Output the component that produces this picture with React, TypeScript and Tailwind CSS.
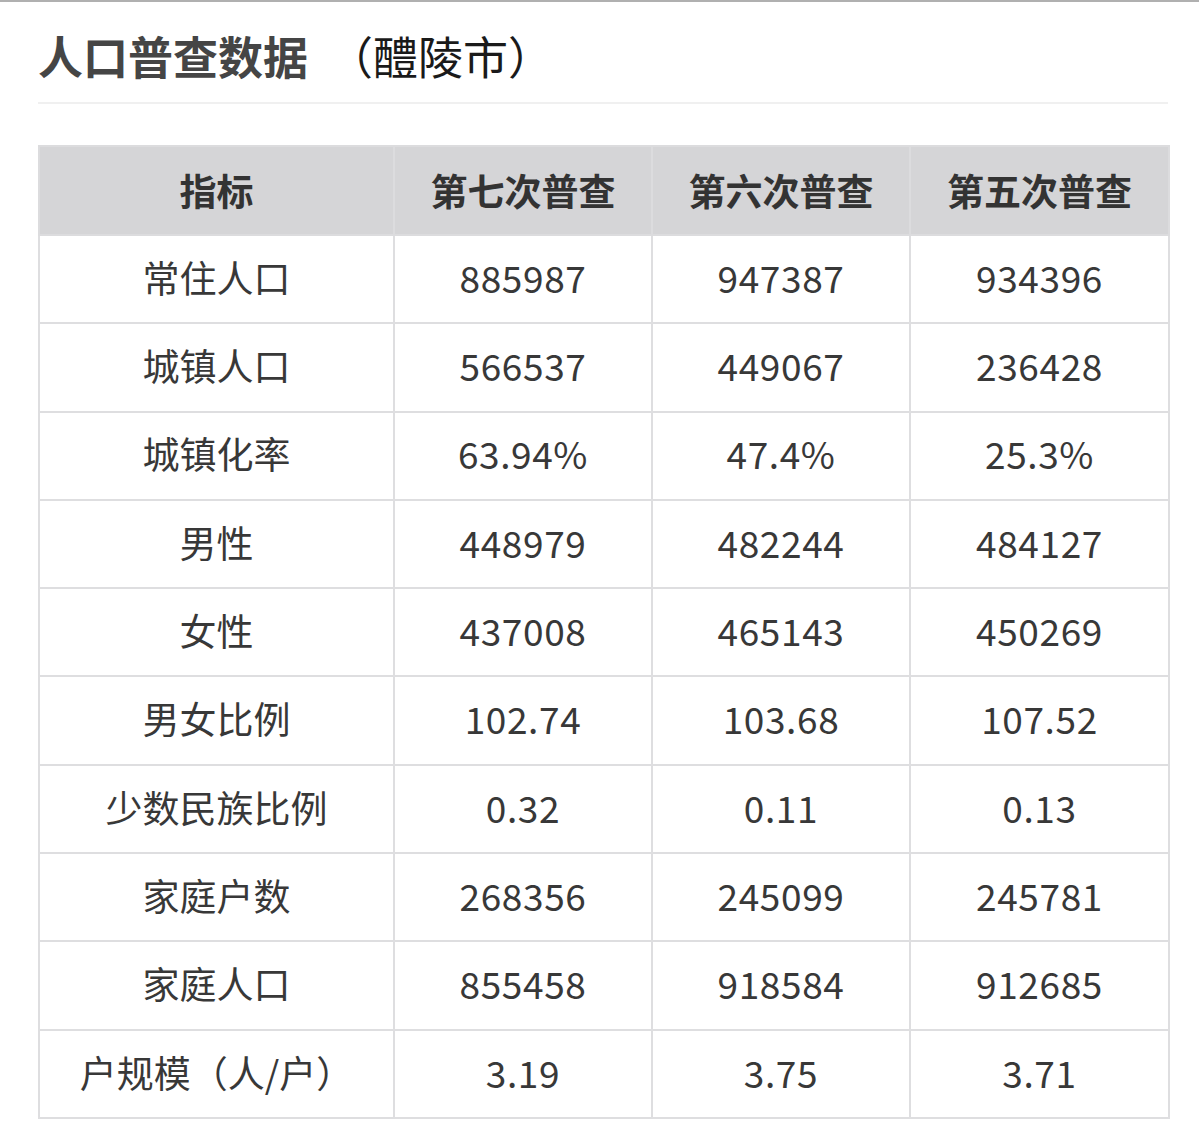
const headers = ['指标', '第七次普查', '第六次普查', '第五次普查'];

const rows = [
  ['常住人口', '885987', '947387', '934396'],
  ['城镇人口', '566537', '449067', '236428'],
  ['城镇化率', '63.94%', '47.4%', '25.3%'],
  ['男性', '448979', '482244', '484127'],
  ['女性', '437008', '465143', '450269'],
  ['男女比例', '102.74', '103.68', '107.52'],
  ['少数民族比例', '0.32', '0.11', '0.13'],
  ['家庭户数', '268356', '245099', '245781'],
  ['家庭人口', '855458', '918584', '912685'],
  ['户规模（人/户）', '3.19', '3.75', '3.71'],
];

export default function App() {
  return (
    <div
      className="min-h-[1126px] w-[1199px] bg-white border-t-2 border-[#b0b0b0]"
      style={{ fontFamily: '"Noto Sans CJK SC", "Noto Sans", sans-serif' }}
    >
      <div className="pl-[38px] pr-[31px]">
        <div className="pt-[31px] pb-[24px] flex items-center text-[45px] leading-none">
          <span className="font-bold text-[#454545]">人口普查数据</span>
          <span className="ml-[20px] text-[#1a1a1a]">（醴陵市）</span>
        </div>
        <div className="h-[2px] bg-[#f0f0f0]" />
        <table className="mt-[41px] w-[1130px] border-collapse table-fixed">
          <colgroup>
            <col className="w-[355px]" />
            <col className="w-[258px]" />
            <col className="w-[258px]" />
            <col className="w-[259px]" />
          </colgroup>
          <thead>
            <tr className="bg-[#d5d5d7]">
              {headers.map((h) => (
                <th
                  key={h}
                  className="h-[89px] border-2 border-[#dcdcde] text-[37px] font-bold text-[#333] text-center"
                >
                  {h}
                </th>
              ))}
            </tr>
          </thead>
          <tbody>
            {rows.map((r) => (
              <tr key={r[0]}>
                {r.map((c, i) => (
                  <td
                    key={i}
                    className={
                      i === 0
                        ? 'h-[88.3px] pb-[3px] border-2 border-[#dedee0] text-[37px] text-[#383838] text-center'
                        : 'h-[88.3px] pb-[3px] border-2 border-[#dedee0] text-[37px] tracking-[0.6px] text-[#383838] text-center'
                    }
                  >
                    {c}
                  </td>
                ))}
              </tr>
            ))}
          </tbody>
        </table>
      </div>
    </div>
  );
}
